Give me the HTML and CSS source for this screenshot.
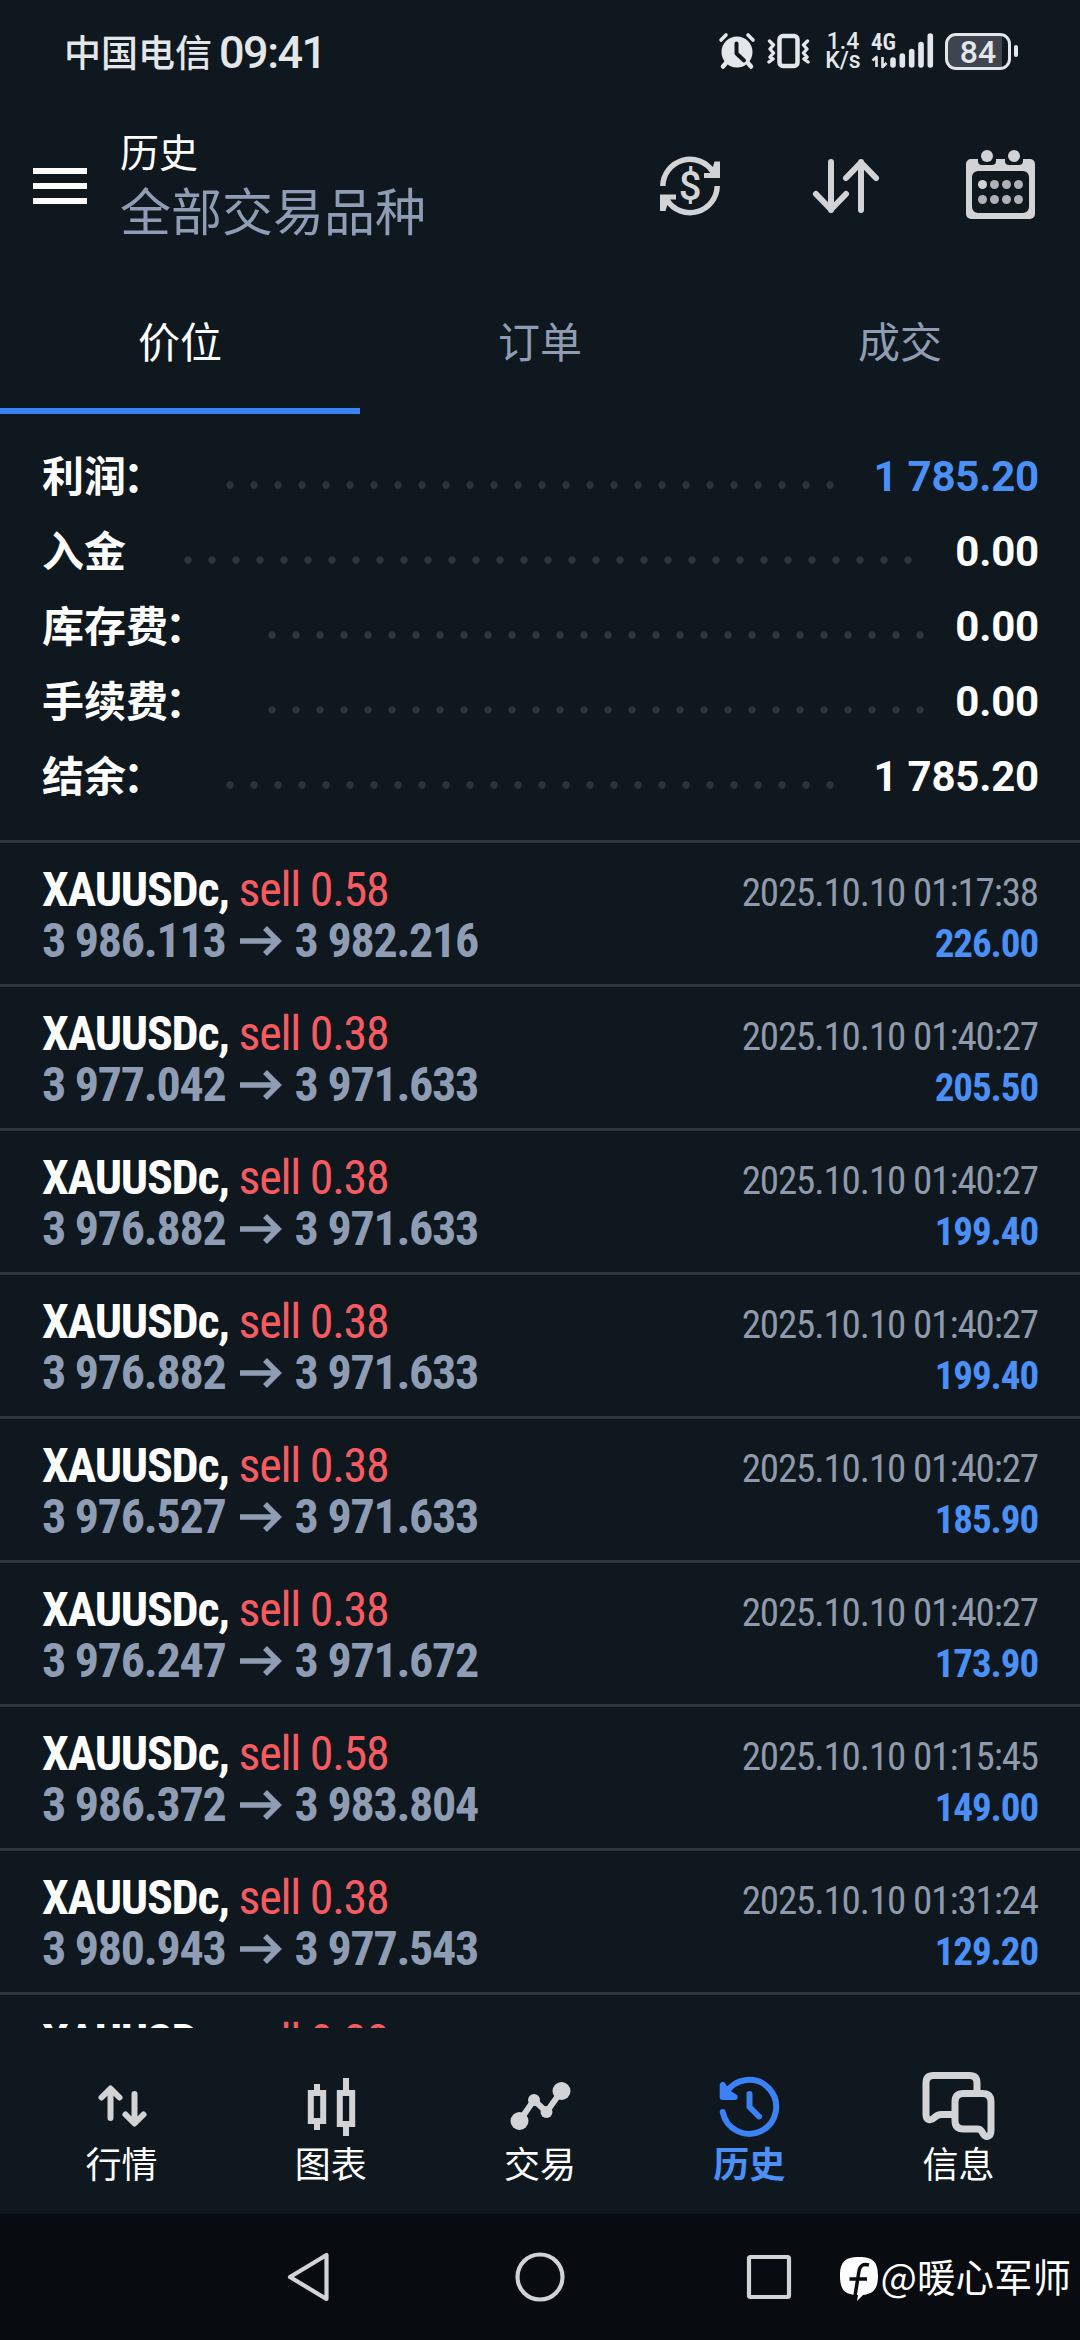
FILE: index.html
```html
<!DOCTYPE html>
<html lang="zh-CN">
<head>
<meta charset="utf-8">
<title>历史</title>
<link rel="stylesheet" href="styles.css">
</head>
<body>
<div class="screen">
  <div class="status">
    <span class="carrier">中国电信</span>
    <span class="clock">09:41</span>
    <div class="status-icons">
      <svg class="alarm" width="38" height="38" viewBox="0 0 38 38">
        <circle cx="19" cy="20" r="15.5" fill="#e4e7ea"/>
        <path d="M3 8l5-5M35 8l-5-5" stroke="#e4e7ea" stroke-width="3.6" stroke-linecap="round"/>
        <path d="M8 31l-3 3.5M30 31l3 3.5" stroke="#e4e7ea" stroke-width="4.5" stroke-linecap="round"/>
        <path d="M18.500 11.500v10l7.500 7" fill="none" stroke="#0f171f" stroke-width="4" stroke-linecap="round" stroke-linejoin="round"/>
      </svg>
      <svg class="vibrate" width="43" height="36" viewBox="0 0 43 36">
        <rect x="12.500" y="3" width="18" height="30" rx="3.500" fill="none" stroke="#e4e7ea" stroke-width="4.500"/>
        <path d="M2.500 8l4 4-3.500 4 3.500 4-3.500 4 3 2-4 3M40.500 8l-4 4 3.500 4-3.500 4 3.500 4-3 2 4 3" fill="none" stroke="#e4e7ea" stroke-width="3.400" stroke-linecap="round" stroke-linejoin="round"/>
      </svg>
      <div class="speed"><span>1.4</span><span>K/s</span></div>
      <div class="signal">
        <span class="net">4G</span>
        <svg width="63" height="36" viewBox="0 0 63 36">
          <path d="M1.500 27.500l4-3.500v10M11.500 24v10l4-4" fill="none" stroke="#e4e7ea" stroke-width="2.600" stroke-linejoin="round"/>
          <path d="M22 27v5M31.300 23v9M40.700 18.500v13.500M50 11.500v20.500M59.300 3v29" stroke="#e4e7ea" stroke-width="5.600" stroke-linecap="round"/>
        </svg>
      </div>
      <div class="battery"><span>84</span></div>
      <i class="nub"></i>
    </div>
  </div>

  <div class="header">
    <div class="menu"><i></i><i></i><i></i></div>
    <div class="titles">
      <div class="title">历史</div>
      <div class="subtitle">全部交易品种</div>
    </div>
    <div class="actions">
      <svg width="60" height="60" viewBox="0 0 60 60">
        <g fill="none" stroke="#d2d3d5" stroke-width="5.500">
          <path d="M2.800 30A27.200 27.200 0 0 1 53 16"/>
          <path d="M57.200 30A27.200 27.200 0 0 1 7 44"/>
        </g>
        <path d="M54.500 5.500H60V22H44V17h7zM5.500 55H0V38.500h16V43.500H9z" fill="#d2d3d5"/>
        <text class="dollar" x="30" y="44" text-anchor="middle">$</text>
      </svg>
      <svg class="sort" width="72" height="60" viewBox="0 0 72 60" fill="none" stroke="#d2d3d5" stroke-width="6" stroke-linecap="round" stroke-linejoin="round">
        <path d="M21 6v48M6 38l15 15.500L36 38M51 54V6M36 22L51 6.500 66 22"/>
      </svg>
      <svg class="calendar" width="81" height="78" viewBox="0 0 81 78">
        <path fill="#d2d3d5" fill-rule="evenodd" d="M11 15h59a5 5 0 0 1 5 5v50a5 5 0 0 1-5 5H11a5 5 0 0 1-5-5V20a5 5 0 0 1 5-5zM18 27a6 6 0 0 0-6 6v30a6 6 0 0 0 6 6h45a6 6 0 0 0 6-6V33a6 6 0 0 0-6-6z"/>
        <path fill="#0f171f" d="M18 13h18v4a4 4 0 0 1-4 4H22a4 4 0 0 1-4-4zM45 13h18v4a4 4 0 0 1-4 4H49a4 4 0 0 1-4-4z"/>
        <g fill="#d2d3d5"><circle cx="27" cy="12" r="6"/><circle cx="54" cy="12" r="6"/><circle cx="22.500" cy="40.500" r="4.500"/></g>
        <g fill="#aeb1b5"><circle cx="34.500" cy="40.500" r="4.500"/><circle cx="46.500" cy="40.500" r="4.500"/><circle cx="58.500" cy="40.500" r="4.500"/><circle cx="22.500" cy="55.500" r="4.500"/><circle cx="34.500" cy="55.500" r="4.500"/><circle cx="46.500" cy="55.500" r="4.500"/><circle cx="58.500" cy="55.500" r="4.500"/></g>
      </svg>
    </div>
  </div>

  <div class="tabs">
    <div class="tab active">价位</div>
    <div class="tab">订单</div>
    <div class="tab">成交</div>
  </div>

  <div class="summary">
    <div class="sum"><span class="label">利润<span class="colon">：</span></span><i class="dots"></i><span class="value blue">1 785.20</span></div>
    <div class="sum"><span class="label">入金</span><i class="dots"></i><span class="value">0.00</span></div>
    <div class="sum"><span class="label">库存费<span class="colon">：</span></span><i class="dots"></i><span class="value">0.00</span></div>
    <div class="sum"><span class="label">手续费<span class="colon">：</span></span><i class="dots"></i><span class="value">0.00</span></div>
    <div class="sum"><span class="label">结余<span class="colon">：</span></span><i class="dots"></i><span class="value">1 785.20</span></div>
  </div>

  <div class="deals">
    <div class="deal"><div class="name">XAUUSDc, <span class="side">sell 0.58</span></div><div class="date">2025.10.10 01:17:38</div><div class="price">3 986.113<svg class="arrow" viewBox="0 0 42 30"><path d="M0 15h38M25 2l13 13-13 13"/></svg>3 982.216</div><div class="profit">226.00</div></div>
    <div class="deal"><div class="name">XAUUSDc, <span class="side">sell 0.38</span></div><div class="date">2025.10.10 01:40:27</div><div class="price">3 977.042<svg class="arrow" viewBox="0 0 42 30"><path d="M0 15h38M25 2l13 13-13 13"/></svg>3 971.633</div><div class="profit">205.50</div></div>
    <div class="deal"><div class="name">XAUUSDc, <span class="side">sell 0.38</span></div><div class="date">2025.10.10 01:40:27</div><div class="price">3 976.882<svg class="arrow" viewBox="0 0 42 30"><path d="M0 15h38M25 2l13 13-13 13"/></svg>3 971.633</div><div class="profit">199.40</div></div>
    <div class="deal"><div class="name">XAUUSDc, <span class="side">sell 0.38</span></div><div class="date">2025.10.10 01:40:27</div><div class="price">3 976.882<svg class="arrow" viewBox="0 0 42 30"><path d="M0 15h38M25 2l13 13-13 13"/></svg>3 971.633</div><div class="profit">199.40</div></div>
    <div class="deal"><div class="name">XAUUSDc, <span class="side">sell 0.38</span></div><div class="date">2025.10.10 01:40:27</div><div class="price">3 976.527<svg class="arrow" viewBox="0 0 42 30"><path d="M0 15h38M25 2l13 13-13 13"/></svg>3 971.633</div><div class="profit">185.90</div></div>
    <div class="deal"><div class="name">XAUUSDc, <span class="side">sell 0.38</span></div><div class="date">2025.10.10 01:40:27</div><div class="price">3 976.247<svg class="arrow" viewBox="0 0 42 30"><path d="M0 15h38M25 2l13 13-13 13"/></svg>3 971.672</div><div class="profit">173.90</div></div>
    <div class="deal"><div class="name">XAUUSDc, <span class="side">sell 0.58</span></div><div class="date">2025.10.10 01:15:45</div><div class="price">3 986.372<svg class="arrow" viewBox="0 0 42 30"><path d="M0 15h38M25 2l13 13-13 13"/></svg>3 983.804</div><div class="profit">149.00</div></div>
    <div class="deal"><div class="name">XAUUSDc, <span class="side">sell 0.38</span></div><div class="date">2025.10.10 01:31:24</div><div class="price">3 980.943<svg class="arrow" viewBox="0 0 42 30"><path d="M0 15h38M25 2l13 13-13 13"/></svg>3 977.543</div><div class="profit">129.20</div></div>
    <div class="deal"><div class="name">XAUUSDc, <span class="side">sell 0.38</span></div></div>
  </div>

  <div class="nav">
    <div class="item">
      <svg width="80" height="72" viewBox="81.500 2070 80 72" fill="none" stroke="#d2d3d5" stroke-width="6" stroke-linecap="round" stroke-linejoin="round"><path d="M110 2118v-29M101 2097.500l9-9 9 9M134 2094v29M125 2114.500l9 9 9-9"/></svg>
      <span>行情</span>
    </div>
    <div class="item">
      <svg width="80" height="72" viewBox="290.500 2070 80 72" fill="none" stroke="#d2d3d5" stroke-width="6"><path d="M316.500 2084v7M316.500 2123v7M310.300 2093h12.400v28h-12.400zM345.500 2078v13M345.500 2126v10M339.300 2093h12.400v31h-12.400z"/></svg>
      <span>图表</span>
    </div>
    <div class="item">
      <svg width="80" height="72" viewBox="499.500 2070 80 72"><path d="M519 2121l14.500-21 12.500 12 15-21" fill="none" stroke="#d2d3d5" stroke-width="6"/><g fill="#d2d3d5"><circle cx="519" cy="2121" r="9"/><circle cx="533.500" cy="2100" r="6"/><circle cx="546" cy="2112" r="6"/><circle cx="561" cy="2091" r="9"/></g></svg>
      <span>交易</span>
    </div>
    <div class="item current">
      <svg width="80" height="72" viewBox="708.500 2070 80 72" fill="none" stroke="#3b82f6" stroke-width="6" stroke-linecap="round" stroke-linejoin="round"><path d="M722.200 2112A27 27 0 1 0 725.500 2093"/><path d="M722.200 2085v12h12l-8-5z" fill="#3b82f6"/><path d="M749 2094v13l9.500 9.500"/></svg>
      <span>历史</span>
    </div>
    <div class="item">
      <svg width="80" height="72" viewBox="917.500 2070 80 72" fill="none" stroke="#d2d3d5" stroke-width="7" stroke-linecap="round" stroke-linejoin="round"><path stroke-linecap="butt" d="M976.500 2093v-10q0-7.500-7.500-7.500h-36q-7.500 0-7.500 7.500v31.500c0 6 5 6.500 8.500 3q3-3 7-3h14"/><path d="M963 2093.500h19q8.500 0 8.500 8.500v28.500c0 7-6 7.500-8 3l-1.500-2.500q-1.500-2-4-2H963q-8.500 0-8.500-8.500V2102q0-8.500 8.500-8.500z"/></svg>
      <span>信息</span>
    </div>
  </div>

  <div class="sysbar">
    <svg class="keys" width="510" height="54" viewBox="285 2250 510 54" fill="none" stroke="#d2d3d5" stroke-width="4.200" stroke-linejoin="round">
      <path d="M290 2277l36.500-22v44z"/>
      <circle cx="540" cy="2277" r="22.500"/>
      <rect x="749" y="2257" width="40" height="40" rx="1.500"/>
    </svg>
    <div class="mark">
      <svg width="38" height="44" viewBox="0 0 38 44"><path d="M19 0c14 0 19 5 19 19 0 13-5 18-15 19l-6 6 1-6C5 38 0 33 0 19 0 5 5 0 19 0z" fill="#fff"/><path d="M29 8c-6-1.500-9 .5-10 6l-4 25M9.500 22h17.500" fill="none" stroke="#080b0f" stroke-width="3.500"/></svg>
      <span>@暖心军师</span>
    </div>
  </div>
</div>
</body>
</html>
```
FILE: styles.css
```css
* { box-sizing: border-box; }
body {
  margin: 0;
  background: #0f171f;
  color: #fff;
  font-family: Roboto, "Noto Sans CJK SC", sans-serif;
}
.screen {
  width: 1080px;
  height: 2340px;
  display: flex;
  flex-direction: column;
  overflow: hidden;
}
svg { display: block; flex: none; }
i { display: block; }

.status {
  height: 102px;
  padding: 0 62px 0 64px;
  display: flex;
  align-items: center;
  color: #e4e7ea;
}
.carrier { font: 500 37px/50px "Noto Sans CJK SC", sans-serif; }
.clock {
  margin: 4px 0 0 7px;
  font-size: 45px;
  line-height: 50px;
  font-weight: 500;
  font-stretch: 88%;
  letter-spacing: -1.5px;
}
.status-icons {
  margin-left: auto;
  display: flex;
  align-items: center;
}
.vibrate { margin-left: 11px; }
.speed {
  margin-left: 15px;
  width: 36px;
  display: flex;
  flex-direction: column;
  align-items: center;
  font-size: 23px;
  line-height: 19px;
  font-weight: 500;
}
.signal {
  position: relative;
  margin-left: 10px;
}
.net {
  position: absolute;
  left: 0;
  top: -2px;
  font-size: 23px;
  line-height: 24px;
  font-weight: 600;
  font-stretch: 85%;
}
.battery {
  margin-left: 11px;
  width: 66px;
  height: 37px;
  border: 3px solid #e4e7ea;
  border-radius: 11px;
  background: linear-gradient(90deg, #3e454e 0 54px, #0f171f 54px);
  font-size: 32px;
  line-height: 32px;
  font-weight: 500;
  font-stretch: 90%;
  text-align: center;
}
.nub {
  margin-left: 3px;
  width: 4px;
  height: 12px;
  border-radius: 2px;
  background: #e4e7ea;
}

.header {
  height: 168px;
  padding: 0 39px 0 33px;
  display: flex;
  align-items: center;
}
.menu {
  width: 54px;
  display: flex;
  flex-direction: column;
  gap: 9px;
}
.menu i { height: 6px; background: #fff; }
.titles { margin: 2px 0 0 33px; }
.title { font-size: 39px; line-height: 54px; }
.subtitle { font-size: 51px; line-height: 66px; color: #8e9db3; }
.actions {
  margin-left: auto;
  display: flex;
  align-items: center;
}
.sort { margin: 0 78px 0 90px; }
.calendar { margin-top: -6px; }
.dollar { font: 500 40px Roboto, sans-serif; fill: #d2d3d5; }

.tabs {
  height: 144px;
  display: flex;
}
.tab {
  flex: 1;
  text-align: center;
  font-size: 42px;
  line-height: 147px;
  color: #8e9db3;
}
.tab.active {
  color: #fff;
  box-shadow: inset 0 -6px #3b82f6;
}

.summary {
  height: 426px;
  padding: 25px 42px 0;
}
.sum {
  height: 75px;
  display: flex;
  align-items: center;
  font-size: 42px;
  font-weight: 700;
  line-height: 75px;
}
.label { padding-top: 2px; }
.colon { margin: 0 3px 0 -3px; }
.value { margin-right: -1px; letter-spacing: -0.2px; }
.dots {
  flex: 1;
  height: 10px;
  margin: 16px 28px 0 50px;
  background: radial-gradient(circle, #2c343d 3.300px, transparent 4.100px) 0 0 / 24px 10px repeat-x;
}
.blue { color: #4a90f6; }

.deals { height: 1188px; overflow: hidden; }
.deal {
  height: 144px;
  border-top: 3px solid #2d343d;
  padding: 21px 42px 0;
  display: grid;
  grid-template-columns: auto auto;
  grid-template-rows: 51px 51px;
  justify-content: space-between;
  align-items: baseline;
  font-family: "Roboto Condensed", Roboto, sans-serif;
  font-stretch: 75%;
  font-size: 48px;
  line-height: 51px;
  letter-spacing: -1.250px;
  white-space: nowrap;
}
.name { font-weight: 700; }
.side { font-weight: 400; color: #f55b60; }
.price {
  display: flex;
  align-items: center;
  font-weight: 700;
  color: #8e9db3;
}
.arrow {
  width: 42px;
  height: 30px;
  margin: 0 13px 0 14px;
  fill: none;
  stroke: currentColor;
  stroke-width: 5.5px;
}
.date, .profit { font-size: 39px; text-align: right; letter-spacing: -1.100px; }
.date { color: #8f9bac; }
.profit { font-weight: 700; color: #4a90f6; }

.nav {
  height: 186px;
  padding: 42px 17px 0;
  display: grid;
  grid-template-columns: repeat(5, 1fr);
}
.item {
  display: flex;
  flex-direction: column;
  align-items: center;
  font-size: 36px;
  line-height: 48px;
}
.current { color: #4a90f6; font-weight: 700; }

.sysbar {
  position: relative;
  height: 126px;
  background: #080b0f;
  display: flex;
  justify-content: center;
  align-items: center;
}
.mark {
  position: absolute;
  right: 9px;
  top: 34px;
  display: flex;
  align-items: center;
  gap: 3px;
  font: 400 38.5px/52px "Noto Sans CJK SC", sans-serif;
}
.mark svg { margin-top: 9px; }
```
